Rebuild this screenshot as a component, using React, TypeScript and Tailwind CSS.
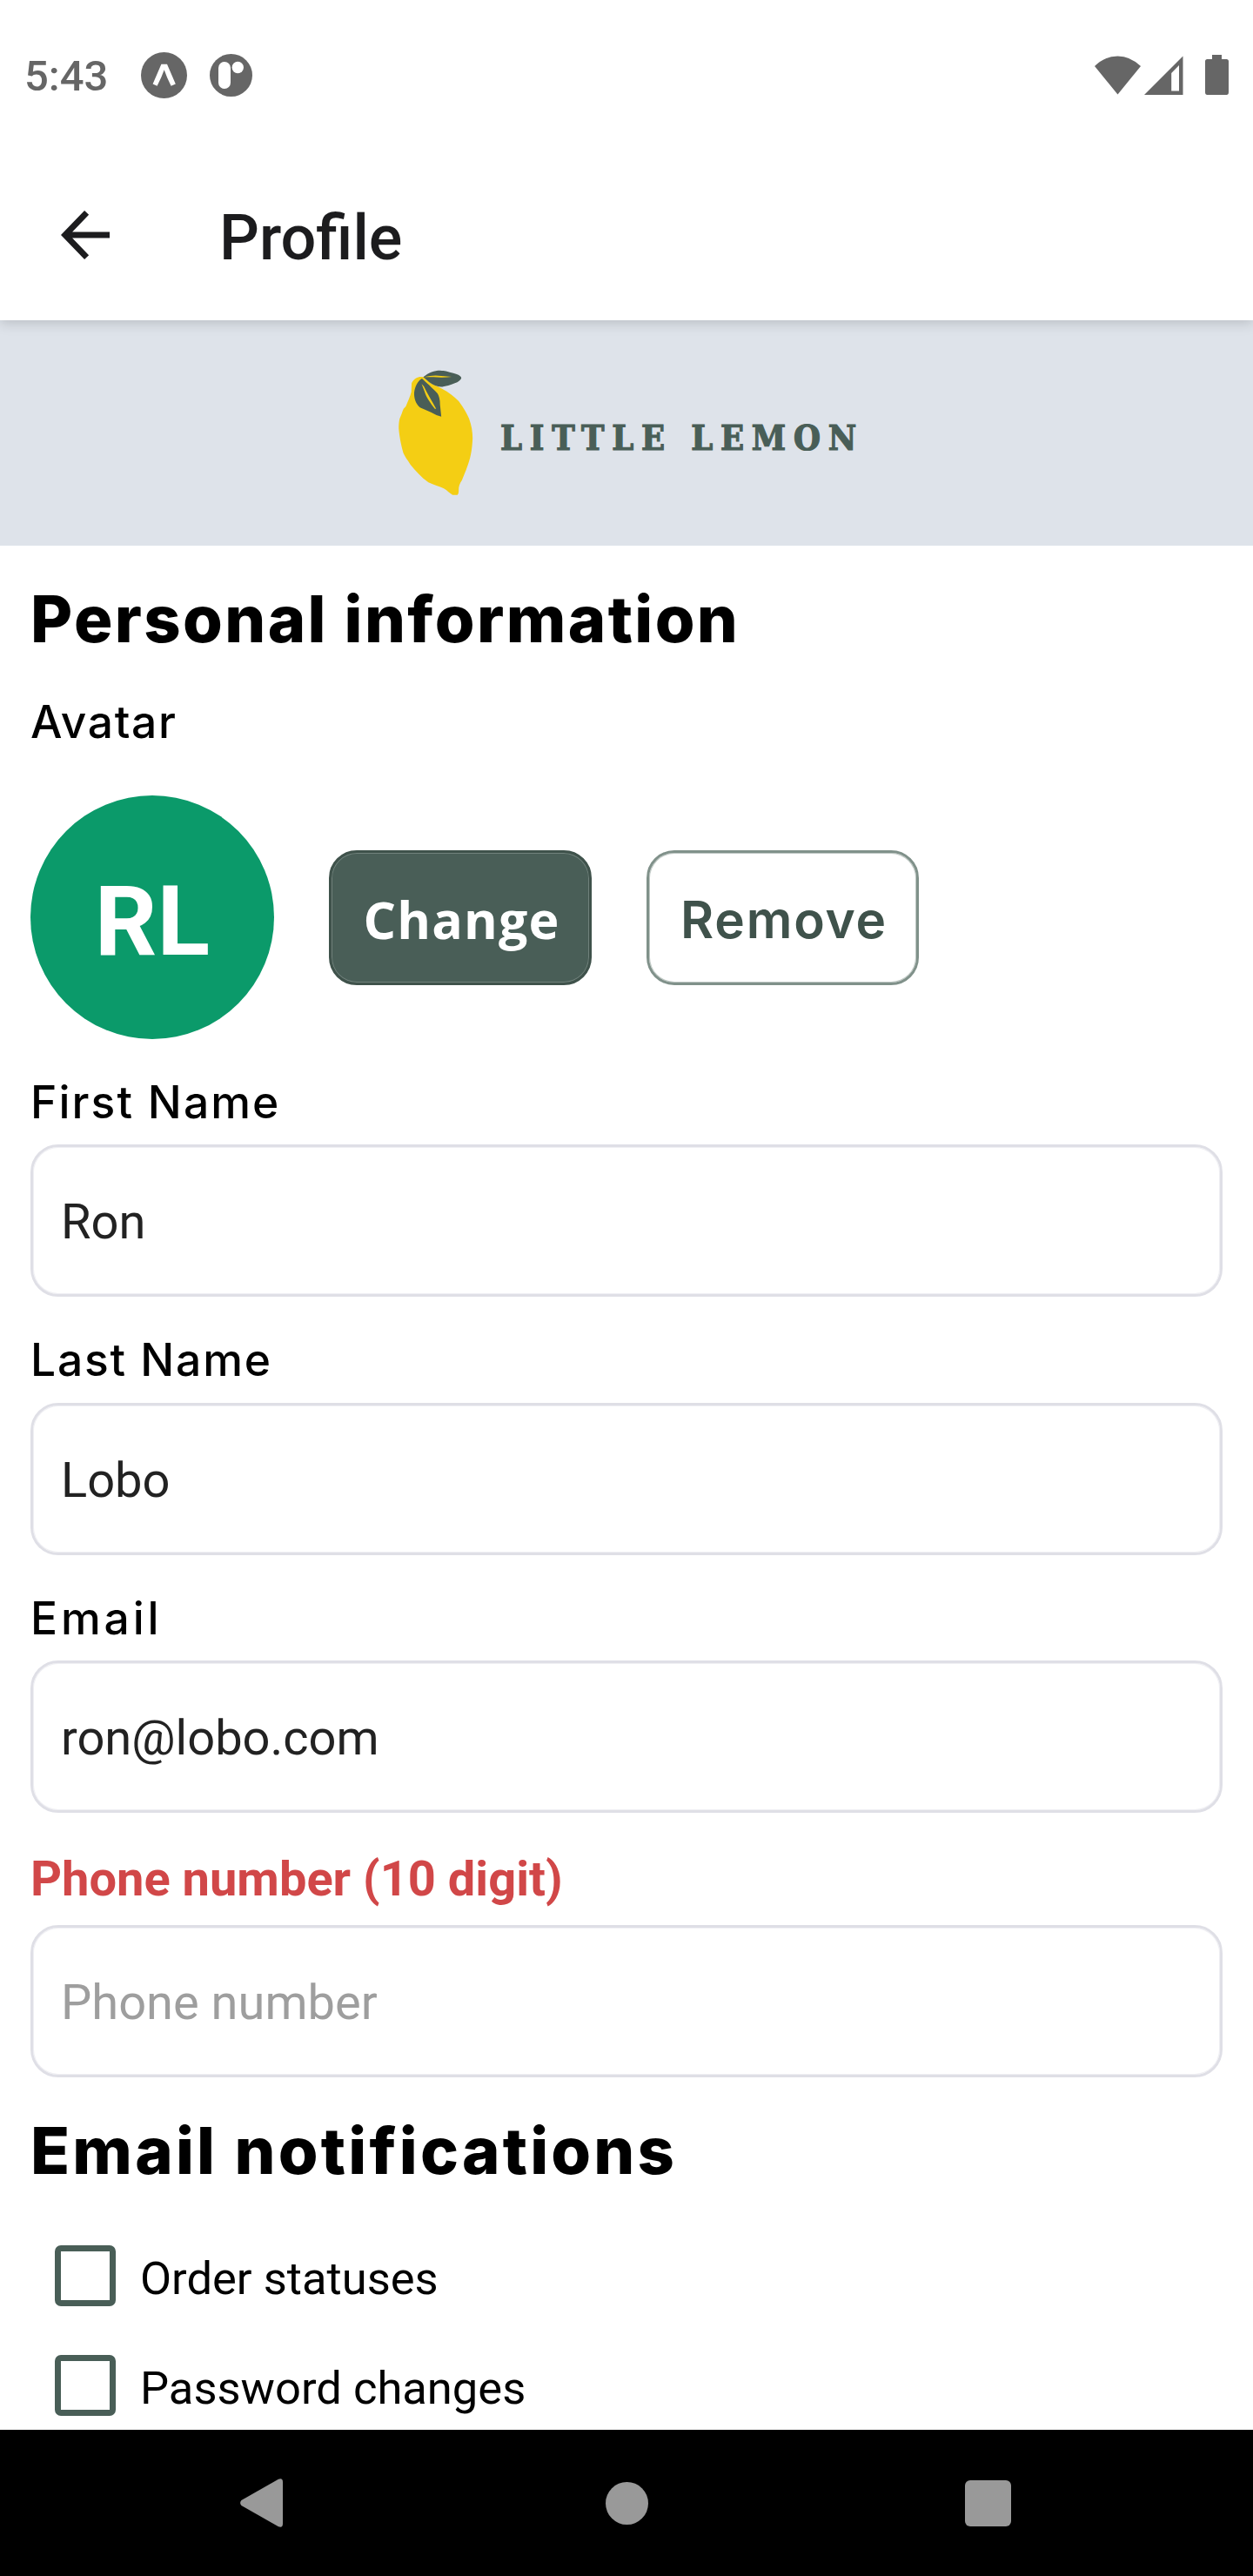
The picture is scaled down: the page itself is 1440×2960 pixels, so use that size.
const fieldBox =
  "flex h-[175px] w-full items-center rounded-[32px] border-[3px] border-[#dfdfe6] bg-white pt-[3px] pl-[32px] font-[Roboto,sans-serif] text-[56px] leading-[66px] shadow-[inset_0_0_0_1px_#efeff3]";

function StatusBar() {
  return (
    <div className="flex h-[172px] items-center pl-[28px] pr-[28px] text-[#666666]">
      <span className="w-[96px] pt-[3px] font-[Roboto,sans-serif] text-[49px] leading-[60px] font-medium whitespace-nowrap">
        5:43
      </span>
      <svg className="ml-[38px] h-[53px] w-[53px]" viewBox="0 0 53 53">
        <circle cx="26.5" cy="26.5" r="26.5" fill="currentColor" />
        <path d="M13.6 36.6 L23.4 13.8 H30 L39.8 36.6 L34.6 38.8 Q29.5 28.5 26.7 20.2 Q23.8 28.5 18.6 38.8 Z" fill="#fff" />
      </svg>
      <svg className="ml-[26px] h-[49px] w-[49px]" viewBox="0 0 49 49">
        <circle cx="24.5" cy="24.5" r="24.5" fill="currentColor" />
        <rect x="10" y="9" width="14" height="31" rx="7" fill="#fff" />
        <circle cx="32.3" cy="15.5" r="6.7" fill="#fff" />
      </svg>
      <svg className="ml-auto h-[45px] w-[53px]" viewBox="0 0 53 45">
        <path d="M26.5 44.5 L0 12 Q12 0.4 26.5 0.4 Q41 0.4 53 12 Z" fill="currentColor" />
      </svg>
      <svg className="ml-[4px] h-[45px] w-[45px]" viewBox="0 0 45 45">
        <path fillRule="evenodd" d="M44.5 0.5 V45 H0 Z M40 11 L31.2 20 V40.4 H40 Z" fill="currentColor" />
      </svg>
      <svg className="ml-[25px] h-[46px] w-[27px]" viewBox="0 0 27 46">
        <path d="M8 0 H19 V5 H24.5 Q27 5 27 7.5 V43 Q27 46 24.5 46 H2.5 Q0 46 0 43 V7.5 Q0 5 2.5 5 H8 Z" fill="currentColor" />
      </svg>
    </div>
  );
}

function TitleBar() {
  return (
    <header className="relative z-10 flex h-[196px] items-center bg-white pl-[70px] text-[#1c1c1e] shadow-[0_3px_14px_rgba(0,0,0,0.17)] [clip-path:inset(0_0_-20px_0)]">
      <svg className="h-[56px] w-[56px]" viewBox="0 0 56 56" fill="none" stroke="currentColor" strokeWidth="7">
        <path d="M56 28 H7 M29.6 2.4 L4.8 28 L29.6 53.6" />
      </svg>
      <h1 className="ml-[126px] pt-[7px] font-[Roboto,sans-serif] text-[72px] leading-[84px] font-medium">Profile</h1>
    </header>
  );
}

function LemonLogo() {
  return (
    <svg className="h-[150px] w-[89px]" viewBox="70 70 240 450" preserveAspectRatio="none">
      <path
        d="M116 122 C124 104 138 98 152 101 C162 106 168 118 178 124 C212 140 240 158 262 184 C278 208 288 228 294 244 C302 268 305 290 305 312 C304 340 301 362 297 380 C290 408 280 436 272 456 C264 468 261 482 262 492 Q262 502 258 507 H243 C234 500 226 492 218 486 C204 478 186 474 168 464 C146 446 128 424 112 402 C104 388 94 374 90 362 C82 330 78 304 76 278 Q76 256 79 244 C84 232 87 220 91 210 L98 202 C104 186 112 168 115 152 Z"
        fill="#f4ce14"
      />
      <path d="M152 101 C170 84 186 78 204 78 C224 79 240 87 256 91 Q270 97 270 105 Q266 115 250 122 C232 130 216 136 200 134 Q176 127 164 112 Z" fill="#495e57" />
      <path d="M154 101 Q184 92 208 97 L240 100 Q210 104 184 101 Z" fill="#f4ce14" />
      <path d="M148 106 C160 118 180 138 196 157 Q204 170 204 196 L208 237 Q194 234 176 222 L142 206 C128 192 123 172 124 154 C126 134 136 112 148 106 Z" fill="#495e57" />
      <path d="M147 125 L154 133 C164 156 178 182 192 210 L188 210 C174 190 160 168 156 150 Z" fill="#f4ce14" />
    </svg>
  );
}

function Brand() {
  return (
    <div className="flex h-[259px] items-start bg-[#dee3ea] pl-[456px] pt-[55px]">
      <LemonLogo />
      <span className="ml-[30px] mt-[55px] font-['DejaVu_Serif_Condensed','DejaVu_Serif',serif] text-[39.5px] leading-[50px] font-bold tracking-[8.8px] whitespace-nowrap text-[#495e57] [font-stretch:condensed] [-webkit-text-stroke:1.2px_#495e57]">
        LITTLE LEMON
      </span>
    </div>
  );
}

function Checkbox({ label }: { label: string }) {
  return (
    <label className="flex h-[70px] items-center pl-[28px]">
      <span className="h-[70px] w-[70px] shrink-0 rounded-[7px] border-[7px] border-[#495e57]" />
      <span className="ml-[28px] pt-[5px] font-[Roboto,sans-serif] text-[52.5px] leading-[62px] whitespace-nowrap text-black">{label}</span>
    </label>
  );
}

const labelText = "h-[60px] font-[Inter,sans-serif] text-[51.5px] leading-[60px] font-medium text-black whitespace-nowrap";
const headingText = "h-[80px] font-[Inter,sans-serif] text-[74px] leading-[79px] font-extrabold text-black whitespace-nowrap";

export default function App() {
  return (
    <div className="flex h-[2960px] w-[1440px] flex-col overflow-hidden bg-white">
      <StatusBar />
      <TitleBar />
      <Brand />
      <main className="flex h-[2165px] shrink-0 flex-col px-[35px]">
        <h2 className={`${headingText} mt-[45px] tracking-[2.4px]`}>Personal information</h2>
        <p className={`${labelText} mt-[47px] tracking-[1.7px]`}>Avatar</p>
        <div className="mt-[55px] flex h-[280px] items-center">
          <div className="flex h-[280px] w-[280px] items-center justify-center rounded-full bg-[#0b9a6a] pt-[10px] font-[Roboto,sans-serif] text-[112px] leading-[132px] font-bold text-white">
            RL
          </div>
          <button className="ml-[63px] h-[155px] w-[302px] rounded-[32px] border-[3px] border-[#3f524b] bg-[#495e57] pt-[4px] pl-[3px] font-['Open_Sans',sans-serif] text-[59px] leading-[70px] font-bold tracking-[1.2px] text-white shadow-[inset_0_0_0_1px_#70817b]">
            Change
          </button>
          <button className="ml-[63px] h-[155px] w-[313px] rounded-[32px] border-[3px] border-[#80918a] bg-white pt-[5px] pl-[3px] font-[Inter,sans-serif] text-[58.5px] leading-[70px] font-semibold tracking-[1.8px] text-[#3f524b] shadow-[inset_0_0_0_1px_#bfc8c4]">
            Remove
          </button>
        </div>
        <p className={`${labelText} mt-[42px] tracking-[2.1px]`}>First Name</p>
        <div className={`${fieldBox} mt-[19px] text-[#222222]`}>Ron</div>
        <p className={`${labelText} mt-[42px] tracking-[1.8px]`}>Last Name</p>
        <div className={`${fieldBox} mt-[20px] text-[#222222]`}>Lobo</div>
        <p className={`${labelText} mt-[42px] tracking-[3.9px]`}>Email</p>
        <div className={`${fieldBox} mt-[19px] text-[#222222]`}>ron@lobo.com</div>
        <p className="mt-[43px] h-[66px] font-[Roboto,sans-serif] text-[56px] leading-[66px] font-bold text-[#d14748]">
          Phone number (10 digit)
        </p>
        <div className={`${fieldBox} mt-[20px] text-[#9e9e9e]`}>Phone number</div>
        <h2 className={`${headingText} mt-[45px] tracking-[3.2px]`}>Email notifications</h2>
        <div className="mt-[68px] flex flex-col gap-[56px]">
          <Checkbox label="Order statuses" />
          <Checkbox label="Password changes" />
        </div>
      </main>
      <nav className="flex h-[168px] shrink-0 items-center bg-black pl-[276px] text-[#999999]">
        <svg className="h-[56px] w-[49px]" viewBox="0 0 49 56">
          <path d="M1.4 25 L44 0.8 Q49 -1 49 4 V52 Q49 57 44 55.2 L1.4 31 Q-1.2 28 1.4 25 Z" fill="currentColor" />
        </svg>
        <span className="ml-[370.5px] h-[49px] w-[49px] rounded-full bg-[#999999]" />
        <span className="ml-[364px] h-[53px] w-[53px] rounded-[6px] bg-[#999999]" />
      </nav>
    </div>
  );
}
